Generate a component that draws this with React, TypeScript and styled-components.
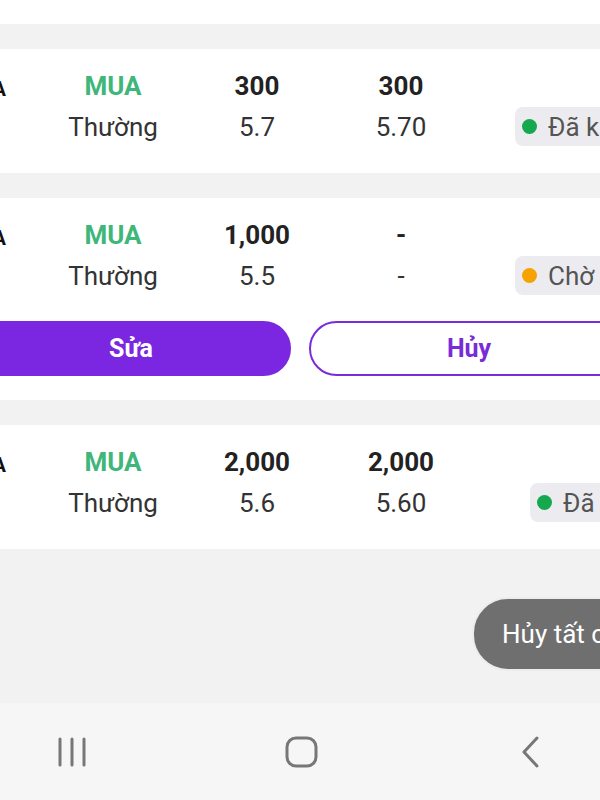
import styled, { createGlobalStyle } from "styled-components";

const Global = createGlobalStyle`
  html, body {
    margin: 0;
    padding: 0;
    background: #f2f2f2;
  }
  body {
    font-family: Roboto, "Noto Sans", sans-serif;
    overflow: hidden;
  }
`;

const Page = styled.div`
  position: relative;
  width: 600px;
  height: 800px;
  overflow: hidden;
  background: #f2f2f2;
  display: flex;
  flex-direction: column;
`;

const List = styled.div`
  flex: 1;
  width: 660px;
  margin-left: -30px;
  display: flex;
  flex-direction: column;
  gap: 25px;
`;

const PrevCardEdge = styled.div`
  height: 24px;
  background: #fff;
`;

const Card = styled.div<{ $withActions?: boolean }>`
  background: #fff;
  padding: 21px 0 ${(p) => (p.$withActions ? "24px" : "30px")};
`;

const Row = styled.div`
  display: grid;
  grid-template-columns: 71px 144px 144px 144px 1fr;
  grid-template-rows: 32px 32px;
  row-gap: 9px;
`;

const Symbol = styled.div`
  grid-row: 1;
  grid-column: 1;
  display: flex;
  justify-content: flex-end;
  white-space: nowrap;
  padding: 6px 35px 0 0;
  font-size: 20px;
  font-weight: 700;
  color: #111;
  line-height: 26px;
`;

const Cell = styled.div<{ $bold?: boolean; $green?: boolean; $col?: number }>`
  grid-column: ${(p) => p.$col ?? "auto"};
  text-align: center;
  font-size: 26px;
  line-height: 32px;
  font-weight: ${(p) => (p.$bold ? 700 : 400)};
  color: ${(p) => (p.$green ? "#3fb67a" : p.$bold ? "#222" : "#333")};
`;

const StatusCell = styled.div`
  grid-row: 1 / span 2;
  grid-column: 5;
  display: flex;
  align-items: flex-end;
`;

const Pill = styled.div<{ $offset: number }>`
  margin-left: ${(p) => p.$offset}px;
  margin-bottom: -3px;
  height: 39px;
  display: flex;
  align-items: center;
  gap: 11px;
  padding: 0 12px 0 7px;
  border-radius: 8px;
  background: #ececf0;
  color: #555;
  font-size: 26px;
  white-space: nowrap;
`;

const Dot = styled.span<{ $color: string }>`
  width: 15px;
  height: 15px;
  border-radius: 50%;
  background: ${(p) => p.$color};
`;

const Actions = styled.div`
  display: flex;
  gap: 18px;
  padding: 0 1px;
  margin-top: 29px;
`;

const ActionButton = styled.button<{ $primary?: boolean }>`
  flex: 1;
  height: 55px;
  border-radius: 28px;
  font-family: inherit;
  font-size: 25px;
  font-weight: 700;
  border: 2px solid;
  background: ${(p) => (p.$primary ? "#7b27e2" : "#fff")};
  border-color: ${(p) => (p.$primary ? "#7b27e2" : "#7a2bd8")};
  color: ${(p) => (p.$primary ? "#fff" : "#7a2bd8")};
`;

const Toast = styled.div`
  position: absolute;
  left: 472px;
  top: 597px;
  height: 70px;
  padding: 0 28px;
  border-radius: 36px;
  background: #6f6f6f;
  border: 2px solid #ececec;
  color: #fff;
  font-size: 26px;
  display: flex;
  align-items: center;
  white-space: nowrap;
`;

const NavBar = styled.div`
  height: 97px;
  background: #f6f6f6;
  display: grid;
  grid-template-columns: repeat(3, 60px);
  column-gap: 169.5px;
  padding-left: 42px;
  align-items: center;
`;

const NavIcon = styled.div`
  display: flex;
  justify-content: center;
  align-items: center;
  color: #777;
`;

type Order = {
  qty: string;
  price: string;
  matchedQty: string;
  matchedPrice: string;
  status: string;
  dot: string;
  offset: number;
  actions?: boolean;
};

const orders: Order[] = [
  { qty: "300", price: "5.7", matchedQty: "300", matchedPrice: "5.70", status: "Đã khớp", dot: "#16a84f", offset: 42 },
  { qty: "1,000", price: "5.5", matchedQty: "-", matchedPrice: "-", status: "Chờ khớp", dot: "#f5a300", offset: 42, actions: true },
  { qty: "2,000", price: "5.6", matchedQty: "2,000", matchedPrice: "5.60", status: "Đã khớp", dot: "#16a84f", offset: 57 },
];

function OrderCard({ order }: { order: Order }) {
  return (
    <Card $withActions={order.actions}>
      <Row>
        <Symbol>HPA</Symbol>
        <Cell $bold $green>MUA</Cell>
        <Cell $bold>{order.qty}</Cell>
        <Cell $bold>{order.matchedQty}</Cell>
        <StatusCell>
          <Pill $offset={order.offset}>
            <Dot $color={order.dot} />
            {order.status}
          </Pill>
        </StatusCell>
        <Cell $col={2}>Thường</Cell>
        <Cell>{order.price}</Cell>
        <Cell>{order.matchedPrice}</Cell>
      </Row>
      {order.actions && (
        <Actions>
          <ActionButton $primary>Sửa</ActionButton>
          <ActionButton>Hủy</ActionButton>
        </Actions>
      )}
    </Card>
  );
}

export default function App() {
  return (
    <Page>
      <Global />
      <List>
        <PrevCardEdge />
        {orders.map((o, i) => (
          <OrderCard key={i} order={o} />
        ))}
      </List>
      <Toast>Hủy tất cả lệnh</Toast>
      <NavBar>
        <NavIcon>
          <svg width="30" height="32" viewBox="0 0 30 32">
            <g stroke="currentColor" strokeWidth="3" strokeLinecap="round">
              <line x1="3" y1="3" x2="3" y2="29" />
              <line x1="15" y1="3" x2="15" y2="29" />
              <line x1="27" y1="3" x2="27" y2="29" />
            </g>
          </svg>
        </NavIcon>
        <NavIcon>
          <svg width="33" height="32" viewBox="0 0 33 32">
            <rect x="2" y="2" width="29" height="28" rx="9" fill="none" stroke="currentColor" strokeWidth="3" />
          </svg>
        </NavIcon>
        <NavIcon>
          <svg width="22" height="32" viewBox="0 0 22 32">
            <polyline points="17,2 4,16 17,30" fill="none" stroke="currentColor" strokeWidth="3" strokeLinecap="round" strokeLinejoin="round" />
          </svg>
        </NavIcon>
      </NavBar>
    </Page>
  );
}
